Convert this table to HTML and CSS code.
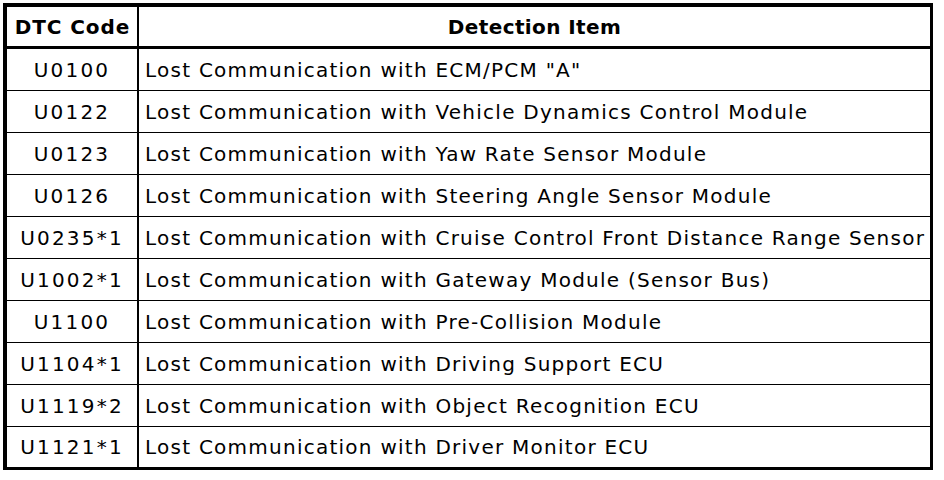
FILE: index.html
```html
<!DOCTYPE html>
<html>
<head>
<meta charset="utf-8">
<link rel="stylesheet" href="styles.css">
</head>
<body>
<table class="dtc">
  <thead>
    <tr><th class="code">DTC Code</th><th class="item">Detection Item</th></tr>
  </thead>
  <tbody>
    <tr><td class="code">U0100</td><td class="item">Lost Communication with ECM/PCM "A"</td></tr>
    <tr><td class="code">U0122</td><td class="item">Lost Communication with Vehicle Dynamics Control Module</td></tr>
    <tr><td class="code">U0123</td><td class="item">Lost Communication with Yaw Rate Sensor Module</td></tr>
    <tr><td class="code">U0126</td><td class="item">Lost Communication with Steering Angle Sensor Module</td></tr>
    <tr><td class="code">U0235*1</td><td class="item">Lost Communication with Cruise Control Front Distance Range Sensor</td></tr>
    <tr><td class="code">U1002*1</td><td class="item">Lost Communication with Gateway Module (Sensor Bus)</td></tr>
    <tr><td class="code">U1100</td><td class="item">Lost Communication with Pre-Collision Module</td></tr>
    <tr><td class="code">U1104*1</td><td class="item">Lost Communication with Driving Support ECU</td></tr>
    <tr><td class="code">U1119*2</td><td class="item">Lost Communication with Object Recognition ECU</td></tr>
    <tr><td class="code">U1121*1</td><td class="item">Lost Communication with Driver Monitor ECU</td></tr>
  </tbody>
</table>
</body>
</html>
```
FILE: styles.css
```css
html, body {
  margin: 0;
  padding: 0;
  background: #ffffff;
}
body {
  padding: 3px;
  font-family: "DejaVu Sans", "Liberation Sans", sans-serif;
  font-size: 20px;
  color: #000;
}
.dtc {
  width: 930px;
  table-layout: fixed;
  border-collapse: separate;
  border-spacing: 0;
  border-style: solid;
  border-color: #000;
  border-width: 4px 3px 3px 4px;
}
.dtc th, .dtc td {
  padding: 0;
  vertical-align: middle;
  white-space: nowrap;
  line-height: 1;
  overflow: visible;
}
.dtc th {
  height: 39px;
  font-weight: bold;
  text-align: center;
  border-bottom: 3px solid #000;
  letter-spacing: 0.4px;
}
.dtc th.code {
  letter-spacing: 0.9px;
  text-indent: 1px;
}
.dtc td {
  height: 41px;
  border-bottom: 1px solid #000;
}
.dtc tbody tr:last-child td {
  border-bottom: 0;
  height: 40px;
}
.dtc .code {
  width: 130px;
  text-align: center;
  border-right: 2px solid #000;
}
.dtc td.code {
  letter-spacing: 2.2px;
  text-indent: 0;
}
.dtc td.item {
  padding-left: 6px;
  text-align: left;
  letter-spacing: 1.25px;
}
```
